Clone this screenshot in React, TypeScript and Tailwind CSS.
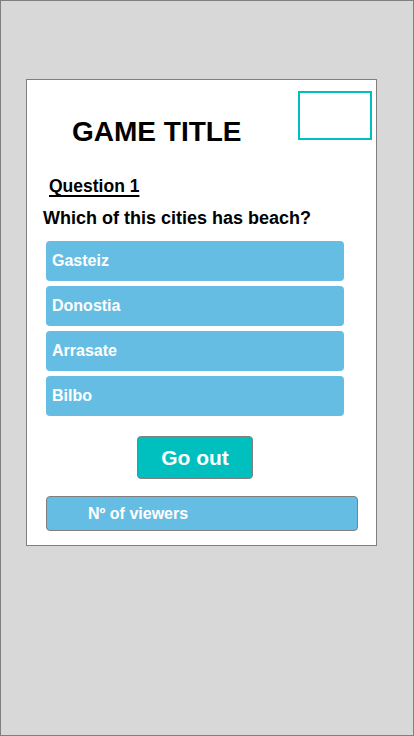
const OPTIONS = ["Gasteiz", "Donostia", "Arrasate", "Bilbo"];

export default function App() {
  return (
    <div
      className="w-[414px] h-[736px] bg-[#d8d8d8] border border-[#7f7f7f] pl-[25px] pt-[78px]"
      style={{ fontFamily: '"Liberation Sans", Arial, sans-serif' }}
    >
      <div className="w-[351px] bg-white border border-[#7f7f7f] flex flex-col items-start pb-[14px]">
        {/* Header */}
        <div className="w-full h-[68px] flex items-start">
          <h1 className="ml-[45px] mt-[36px] text-[28px] leading-[32px] font-bold text-black">GAME TITLE</h1>
          <div className="ml-auto mr-[4px] mt-[11px] w-[74px] h-[49px] border-2 border-[#00bfbf]" />
        </div>

        {/* Question */}
        <div className="ml-[22px] mt-[28px] text-[17.5px] leading-[20px] font-bold text-black underline decoration-2 underline-offset-[3px]">
          Question 1
        </div>
        <p className="ml-[16px] mt-[11px] text-[18px] leading-[22px] font-bold text-black">
          Which of this cities has beach?
        </p>

        {/* Answers */}
        <div className="ml-[19px] mt-[12px] flex flex-col gap-[5px]">
          {OPTIONS.map((o) => (
            <button
              key={o}
              className="w-[298px] h-[40px] rounded-[4px] bg-[#66bde3] text-white text-[16px] font-bold text-left pl-[6px]"
            >
              {o}
            </button>
          ))}
        </div>

        <button className="ml-[110px] mt-[20px] w-[116px] h-[43px] rounded-[4px] bg-[#00bfbf] border border-[#7f7f7f] text-white text-[21px] font-bold">
          Go out
        </button>

        <div className="ml-[19px] mt-[17px] w-[312px] h-[35px] rounded-[4px] bg-[#66bde3] border border-[#7f7f7f] flex items-center pl-[41px] text-white text-[16px] font-bold">
          Nº of viewers
        </div>
      </div>
    </div>
  );
}
